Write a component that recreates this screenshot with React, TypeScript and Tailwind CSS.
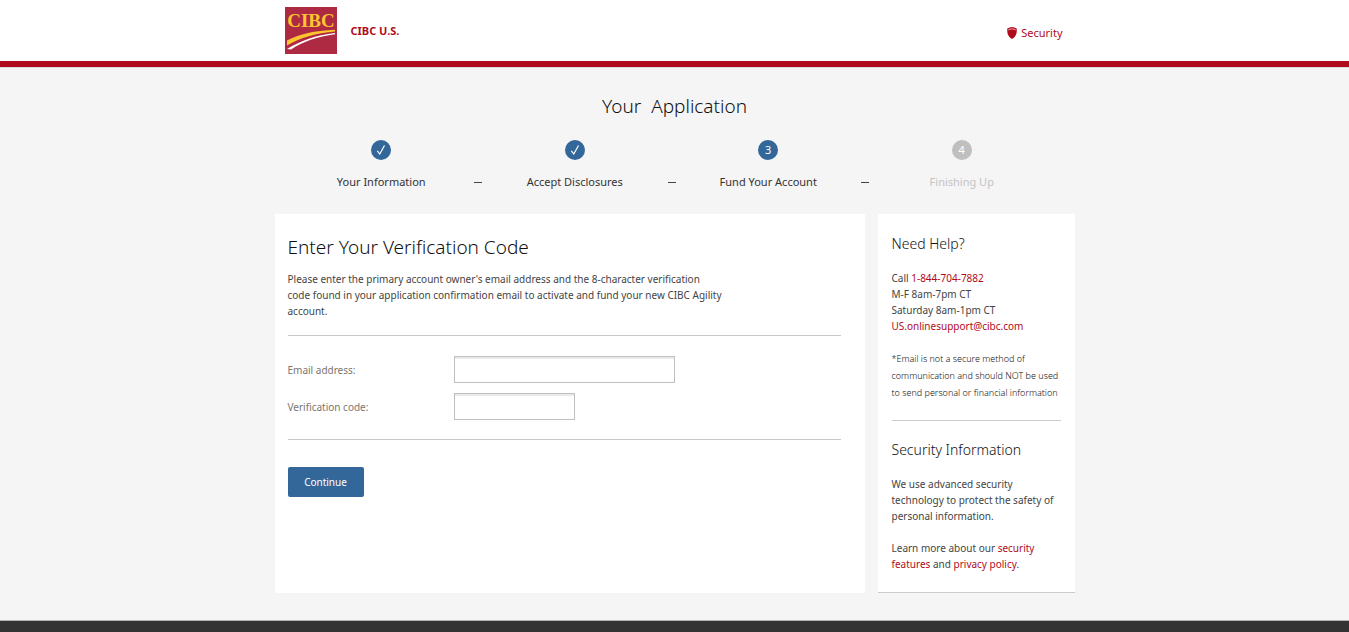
import { Fragment } from "react";

const steps = [
  { label: "Your Information", mark: "✓", state: "done" },
  { label: "Accept Disclosures", mark: "✓", state: "done" },
  { label: "Fund Your Account", mark: "3", state: "current" },
  { label: "Finishing Up", mark: "4", state: "upcoming" },
];

const inputClass =
  "h-[27px] border border-[#bfbfbf] bg-white px-2 text-[10px] shadow-[inset_0_2px_0_#e9e9e9] outline-none focus:border-[#336699]";
const linkClass = "text-[#b00b1c] hover:underline";

function Logo() {
  return (
    <svg width="52" height="47" viewBox="0 0 52 47" role="img" aria-label="CIBC">
      <rect width="52" height="47" fill="#ae2a42" />
      <text
        x="26"
        y="20"
        textAnchor="middle"
        fontFamily="'Liberation Serif', serif"
        fontSize="19"
        fill="#fdc52f"
      >
        CIBC
      </text>
      <path d="M2 33.500C14 27.500 30 23.500 50 22.800V24.600C31 26 15 31 2 38.500Z" fill="#fdc52f" />
      <path d="M2 42C15 34 31 27.800 50 26V27.300C33 29.500 17 35 6 42.500Z" fill="#fff" />
    </svg>
  );
}

function ShieldIcon() {
  return (
    <svg width="10" height="12" viewBox="0 0 10 12" aria-hidden="true">
      <path d="M5 0C6.600 .2 8 .7 9.700 1.500C10 6 9.300 9.700 5 12C.7 9.700 0 6 .3 1.500C2 .7 3.400 .2 5 0Z" fill="#b00b1c" />
      <path d="M1.200 3C3.500 1.500 6.500 1.500 8.800 3" fill="none" stroke="#f3c9cd" strokeWidth="0.8" />
    </svg>
  );
}

function Header() {
  return (
    <header className="border-b border-[#dcdcdc] bg-white">
      <div className="border-b-6 border-[#b00b1c]">
        <div className="mx-auto flex h-[61px] max-w-[800px] items-center justify-between pr-3 pl-2.5">
          <a href="#home" className="flex items-center gap-3.5 text-[11px] font-bold text-[#b00b1c]">
            <Logo />
            <span>CIBC U.S.</span>
          </a>
          <a href="#security" className="flex items-center gap-1 pt-1 text-[11px] text-[#b00b1c]">
            <ShieldIcon />
            <span>Security</span>
          </a>
        </div>
      </div>
    </header>
  );
}

function Steps() {
  return (
    <ol className="mt-5 flex pr-3 pl-3.5">
      {steps.map(({ label, mark, state }, i) => {
        const upcoming = state === "upcoming";
        return (
          <li key={label} className="flex flex-1 items-end text-[11px] leading-4">
            <div className="flex flex-1 flex-col items-center gap-3.5">
              <span
                className={`flex size-5 items-center justify-center rounded-full text-[11px] leading-5 text-white ${
                  upcoming ? "bg-[#bfbfbf]" : "bg-[#336699]"
                }`}
              >
                {state === "done" ? (
                  <svg width="10" height="12" viewBox="0 0 10 12" role="img" aria-label="Completed">
                    <path d="M1.300 6.800L3.800 10L8.500 1.500" fill="none" stroke="currentColor" strokeWidth="1.200" />
                  </svg>
                ) : (
                  mark
                )}
              </span>
              <span className={upcoming ? "text-[#c4c4c4]" : "text-[#333]"}>{label}</span>
            </div>
            <span className="w-2 pb-[7px]" aria-hidden="true">
              {i < steps.length - 1 && <span className="block h-px bg-[#444]" />}
            </span>
          </li>
        );
      })}
    </ol>
  );
}

function VerificationForm() {
  return (
    <form className="min-w-0 flex-1 bg-white pt-5 pr-6 pb-8 pl-[13px]" onSubmit={(e) => e.preventDefault()}>
      <h2 className="text-[19px] leading-[26px] font-light text-[#111]">Enter Your Verification Code</h2>
      <p className="mt-[11px]">
        Please enter the primary account owner's email address and the 8-character verification
        <br />
        code found in your application confirmation email to activate and fund your new CIBC Agility
        <br />
        account.
      </p>
      <div className="mt-4 grid grid-cols-[166px_1fr] items-center gap-y-2.5 border-y border-[#c8c8c8] pt-5 pb-[19px] text-[#7a7570]">
        <label htmlFor="email">Email address:</label>
        <input id="email" type="email" className={`${inputClass} w-[221px]`} />
        <label htmlFor="code">Verification code:</label>
        <input id="code" type="text" className={`${inputClass} w-[121px]`} />
      </div>
      <button type="submit" className="mt-[27px] h-[30px] w-[76px] rounded-xs bg-[#336699] text-white">
        Continue
      </button>
    </form>
  );
}

function Sidebar() {
  const hours = ["M-F 8am-7pm CT", "Saturday 8am-1pm CT"];
  return (
    <aside className="w-[197px] shrink-0 border-b border-[#ccc] bg-white px-3.5 pt-5 pb-5">
      <h3 className="text-sm leading-5 font-light text-[#111]">Need Help?</h3>
      <p className="mt-4">
        Call{" "}
        <a href="tel:18447047882" className={linkClass}>
          1-844-704-7882
        </a>
        <br />
        {hours.map((line) => (
          <Fragment key={line}>
            {line}
            <br />
          </Fragment>
        ))}
        <a href="mailto:US.onlinesupport@cibc.com" className={linkClass}>
          US.onlinesupport@cibc.com
        </a>
      </p>
      <p className="mt-4 text-[9px] leading-[17px] font-light whitespace-nowrap text-[#111]">
        *Email is not a secure method of
        <br />
        communication and should NOT be used
        <br />
        to send personal or financial information
      </p>
      <div className="mt-[19px] border-t border-[#ccc] pt-[19px]">
        <h3 className="text-sm leading-5 font-light text-[#111]">Security Information</h3>
        <p className="mt-4 whitespace-nowrap">
          We use advanced security
          <br />
          technology to protect the safety of
          <br />
          personal information.
        </p>
        <p className="mt-4">
          Learn more about our{" "}
          <a href="#features" className={linkClass}>
            security
            <br />
            features
          </a>{" "}
          and{" "}
          <a href="#privacy" className={linkClass}>
            privacy policy
          </a>
          .
        </p>
      </div>
    </aside>
  );
}

export default function App() {
  return (
    <div className="flex min-h-screen flex-col bg-[#f5f5f5] font-['Noto_Sans','Open_Sans',sans-serif] text-[10px] leading-4 text-[#444]">
      <Header />
      <main className="mx-auto w-full max-w-[800px] pb-[27px]">
        <h1 className="pt-6 text-center text-[19px] leading-7 font-light whitespace-pre text-[#111]">Your  Application</h1>
        <Steps />
        <div className="mt-6 flex items-stretch gap-[13px]">
          <VerificationForm />
          <Sidebar />
        </div>
      </main>
      <footer className="min-h-3 flex-1 border-t border-[#b5b5b5] bg-[#333]" />
    </div>
  );
}
